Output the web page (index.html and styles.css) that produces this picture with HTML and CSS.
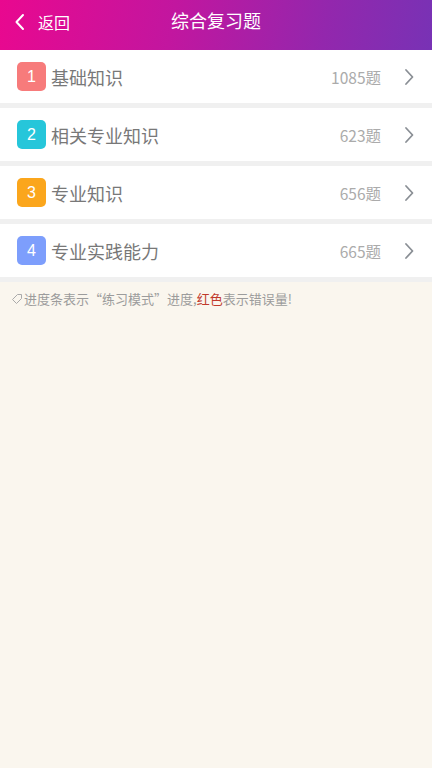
FILE: index.html
```html
<!DOCTYPE html>
<html lang="zh">
<head>
<meta charset="utf-8">
<link rel="stylesheet" href="styles.css">
</head>
<body>
<header class="topbar">
  <div class="back">
    <svg class="back-icon" width="12" height="18" viewBox="0 0 12 18"><path d="M9 2 L2.5 9 L9 16" fill="none" stroke="#fff" stroke-width="2" stroke-linecap="round" stroke-linejoin="round"/></svg>
    <span>返回</span>
  </div>
  <div class="title">综合复习题</div>
</header>
<main class="list">
  <div class="row">
    <span class="badge b1">1</span>
    <span class="name">基础知识</span>
    <span class="count">1085题</span>
    <svg class="chev" width="12" height="18" viewBox="0 0 12 18"><path d="M3 2 L9.5 9 L3 16" fill="none" stroke="#8a8f95" stroke-width="1.8" stroke-linecap="round" stroke-linejoin="round"/></svg>
  </div>
  <div class="row">
    <span class="badge b2">2</span>
    <span class="name">相关专业知识</span>
    <span class="count">623题</span>
    <svg class="chev" width="12" height="18" viewBox="0 0 12 18"><path d="M3 2 L9.5 9 L3 16" fill="none" stroke="#8a8f95" stroke-width="1.8" stroke-linecap="round" stroke-linejoin="round"/></svg>
  </div>
  <div class="row">
    <span class="badge b3">3</span>
    <span class="name">专业知识</span>
    <span class="count">656题</span>
    <svg class="chev" width="12" height="18" viewBox="0 0 12 18"><path d="M3 2 L9.5 9 L3 16" fill="none" stroke="#8a8f95" stroke-width="1.8" stroke-linecap="round" stroke-linejoin="round"/></svg>
  </div>
  <div class="row">
    <span class="badge b4">4</span>
    <span class="name">专业实践能力</span>
    <span class="count">665题</span>
    <svg class="chev" width="12" height="18" viewBox="0 0 12 18"><path d="M3 2 L9.5 9 L3 16" fill="none" stroke="#8a8f95" stroke-width="1.8" stroke-linecap="round" stroke-linejoin="round"/></svg>
  </div>
</main>
<p class="hint">
  <svg class="tag" width="12" height="12" viewBox="0 0 12 12"><path d="M6.5 1.5 H10.5 V5.5 L5.5 10.5 L1.5 6.5 Z" fill="none" stroke="#aaa" stroke-width="1" stroke-linejoin="round"/></svg><span>进度条表示“练习模式”进度,</span><span class="red">红色</span><span>表示错误量!</span>
</p>
</body>
</html>
```
FILE: styles.css
```css
html, body {
  margin: 0;
  padding: 0;
}
body {
  width: 432px;
  min-height: 768px;
  background: #faf6ee;
  font-family: "Noto Sans CJK SC", "Noto Sans", sans-serif;
}
.topbar {
  height: 50px;
  background: linear-gradient(100deg, #e9088f 0%, #c2169f 40%, #9327ad 75%, #7832b5 100%);
  display: flex;
  align-items: center;
  position: relative;
  color: #fff;
}
.back {
  display: flex;
  align-items: center;
  padding-left: 14px;
  gap: 12px;
  font-size: 16px;
  margin-top: -7px;
}
.title {
  position: absolute;
  left: 0;
  right: 0;
  top: 7px;
  text-align: center;
  font-size: 18px;
  pointer-events: none;
}
.list {
  background: #f0f0f0;
  display: flex;
  flex-direction: column;
  gap: 5px;
  padding-bottom: 5px;
}
.row {
  height: 53px;
  background: #fff;
  display: flex;
  align-items: center;
  padding: 0 17px;
}
.badge {
  width: 29px;
  height: 29px;
  border-radius: 5px;
  color: #fff;
  font-family: "Liberation Sans", sans-serif;
  font-size: 16px;
  display: flex;
  align-items: center;
  justify-content: center;
  margin-right: 5px;
}
.b1 { background: #f77b7b; }
.b2 { background: #26c6da; }
.b3 { background: #fba61c; }
.b4 { background: #7d9efc; }
.name {
  font-size: 18px;
  color: #787878;
  flex: 1;
}
.count {
  font-size: 15.5px;
  color: #ababab;
  margin-right: 22px;
}
.chev {
  display: block;
}
.hint {
  margin: 0;
  padding: 7px 11px;
  font-size: 13px;
  color: #9c9c9c;
  display: flex;
  align-items: center;
}
.tag {
  margin-right: 1px;
}
.red {
  color: #c0392b;
}
```
